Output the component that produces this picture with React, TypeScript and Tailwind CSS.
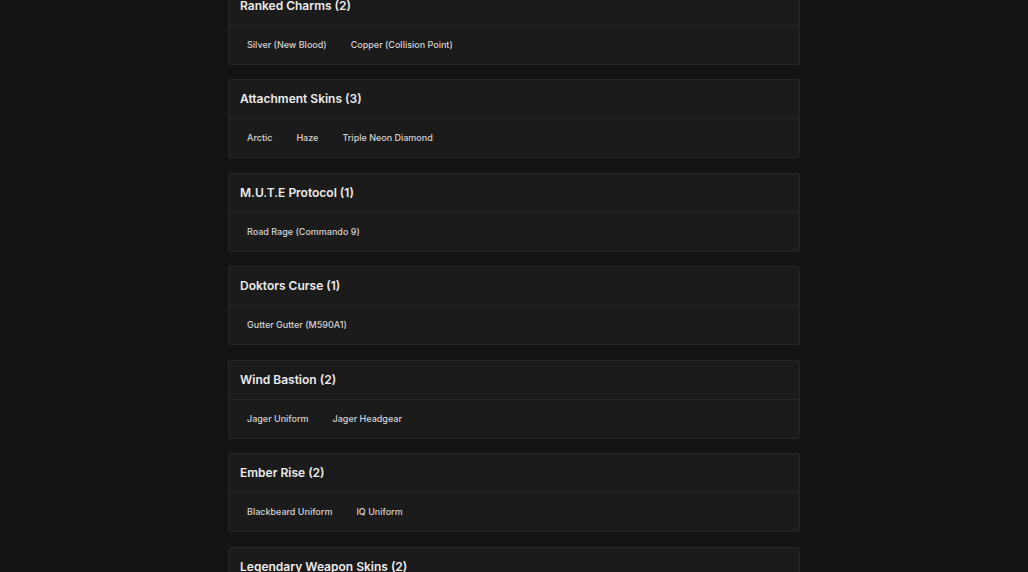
const sections = [
  { title: "Ranked Charms", items: ["Silver (New Blood)", "Copper (Collision Point)"] },
  { title: "Attachment Skins", items: ["Arctic", "Haze", "Triple Neon Diamond"] },
  { title: "M.U.T.E Protocol", items: ["Road Rage (Commando 9)"] },
  { title: "Doktors Curse", items: ["Gutter Gutter (M590A1)"] },
  { title: "Wind Bastion", items: ["Jager Uniform", "Jager Headgear"] },
  { title: "Ember Rise", items: ["Blackbeard Uniform", "IQ Uniform"] },
  { title: "Legendary Weapon Skins", items: ["Elite Skin", "Black Ice"] },
];

function SectionCard({ title, items }: { title: string; items: string[] }) {
  return (
    <div className="bg-[#1b1b1b] border border-[#262626] rounded-[2px]">
      <div className="h-[39px] flex items-center px-[11px] border-b border-[#262626]">
        <h2 className="text-[12px] font-semibold text-[#ececec]">
          {title} ({items.length})
        </h2>
      </div>
      <div className="h-[38px] flex items-center px-[6px]">
        {items.map((item) => (
          <span key={item} className="px-3 text-[9px] font-medium text-[#d4d4d4]">
            {item}
          </span>
        ))}
      </div>
    </div>
  );
}

export default function App() {
  return (
    <div
      className="h-screen overflow-hidden bg-[#131313]"
      style={{ fontFamily: "Inter, 'Liberation Sans', sans-serif" }}
    >
      <div className="w-[572px] mx-auto -mt-[14.5px] flex flex-col gap-[14.5px]">
        {sections.map((s) => (
          <SectionCard key={s.title} title={s.title} items={s.items} />
        ))}
      </div>
    </div>
  );
}
